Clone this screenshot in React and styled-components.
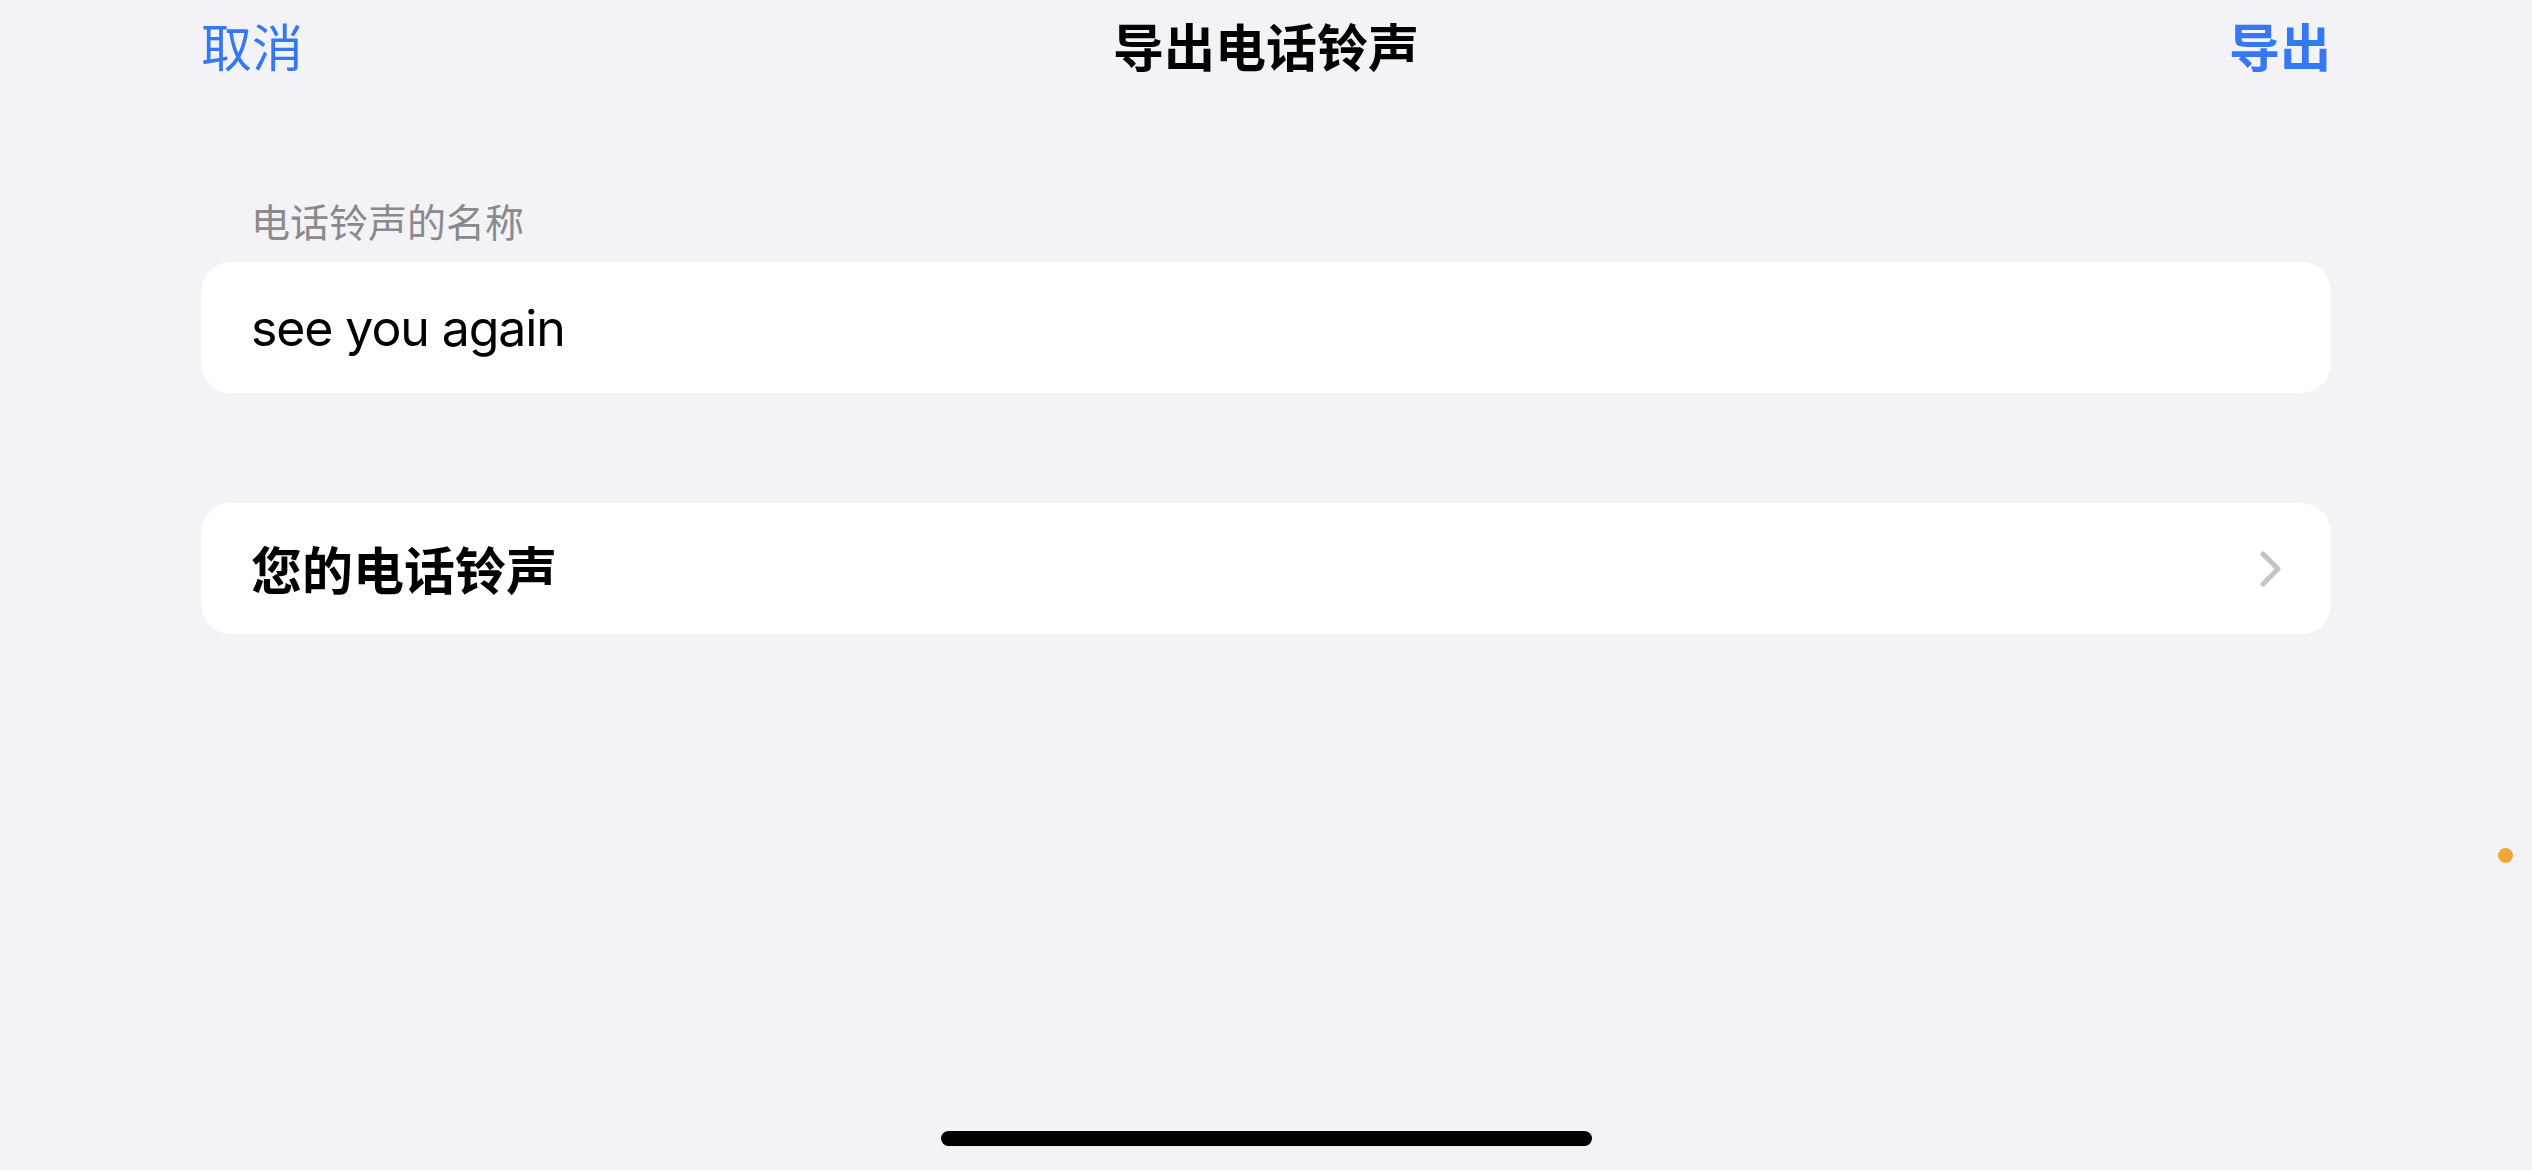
import React from "react";
import styled, { createGlobalStyle } from "styled-components";

const GlobalStyle = createGlobalStyle`
  html, body {
    margin: 0;
    padding: 0;
    background-color: #f2f2f7;
  }
  body {
    font-family: Inter, "Noto Sans CJK SC", sans-serif;
    -webkit-font-smoothing: antialiased;
  }
`;

const App = () => {
  return (
    <Screen>
      <GlobalStyle />
      <NavBar>
        <NavButton>取消</NavButton>
        <NavTitle>导出电话铃声</NavTitle>
        <NavButton bold>导出</NavButton>
      </NavBar>

      <Form>
        <SectionHeader>电话铃声的名称</SectionHeader>
        <Card>
          <NameInput defaultValue="see you again" spellCheck={false} />
        </Card>

        <Card spaced>
          <RowTitle>您的电话铃声</RowTitle>
          <Chevron viewBox="0 0 22 36" aria-hidden="true">
            <polyline points="3,3 18,18 3,33" />
          </Chevron>
        </Card>
      </Form>

      <PrivacyDot />
      <HomeIndicator />
    </Screen>
  );
};

export default App;

// style
const Screen = styled.div`
  position: relative;
  width: 100%;
  min-height: 100vh;
  display: flex;
  flex-direction: column;
  background-color: #f2f2f7;
`;

const NavBar = styled.header`
  height: 90px;
  padding: 0 201px 0 201px;
  display: flex;
  align-items: center;
  justify-content: space-between;
  box-sizing: border-box;
`;

const NavButton = styled.span`
  width: 220px;
  font-family: "Noto Sans CJK SC", sans-serif;
  font-size: 51px;
  line-height: 1;
  font-weight: ${(props) => (props.bold ? 600 : 400)};
  color: #3478f6;
  text-align: ${(props) => (props.bold ? "right" : "left")};
`;

const NavTitle = styled.h1`
  margin: 0;
  font-family: "Noto Sans CJK SC", sans-serif;
  font-size: 51px;
  line-height: 1;
  font-weight: 600;
  color: #000000;
`;

const Form = styled.main`
  padding: 0 201px;
  display: flex;
  flex-direction: column;
`;

const SectionHeader = styled.div`
  margin-top: 107px;
  margin-bottom: 19px;
  padding-left: 50px;
  font-family: "Noto Sans CJK SC", sans-serif;
  font-size: 39px;
  line-height: 46px;
  color: #8a8a8e;
`;

const Card = styled.div`
  height: 131px;
  margin-top: ${(props) => (props.spaced ? "110px" : "0")};
  padding: 0 49px 0 50px;
  display: flex;
  align-items: center;
  justify-content: space-between;
  background-color: #ffffff;
  border-radius: 30px;
  box-sizing: border-box;
`;

const NameInput = styled.input`
  flex: 1;
  border: none;
  outline: none;
  padding: 0;
  background: transparent;
  font-family: Inter, "Noto Sans CJK SC", sans-serif;
  font-size: 50px;
  letter-spacing: -1.1px;
  color: #000000;
`;

const RowTitle = styled.span`
  font-family: "Noto Sans CJK SC", sans-serif;
  font-size: 51px;
  line-height: 1;
  font-weight: 700;
  color: #000000;
`;

const Chevron = styled.svg`
  width: 22px;
  height: 36px;
  fill: none;
  stroke: #c4c4c7;
  stroke-width: 5;
  stroke-linecap: round;
  stroke-linejoin: round;
`;

const PrivacyDot = styled.span`
  position: absolute;
  top: 848px;
  left: 2498px;
  width: 15px;
  height: 15px;
  border-radius: 50%;
  background-color: #f3a53c;
`;

const HomeIndicator = styled.span`
  position: absolute;
  left: 941px;
  top: 1131px;
  width: 651px;
  height: 15px;
  border-radius: 8px;
  background-color: #000000;
`;
